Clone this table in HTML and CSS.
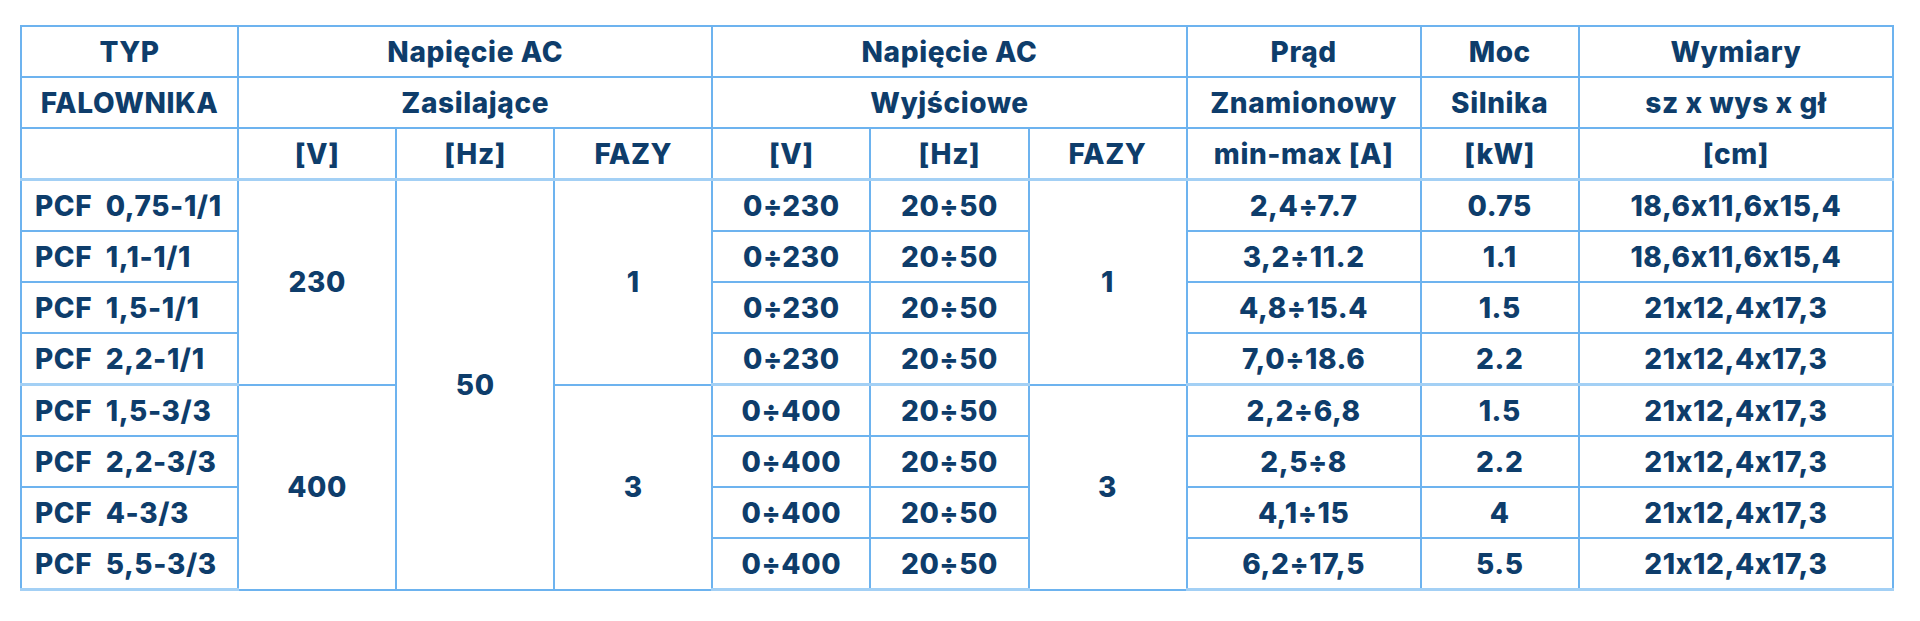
FILE: index.html
```html
<!DOCTYPE html>
<html lang="pl">
<head>
<meta charset="utf-8">
<title>Falowniki PCF</title>
<link rel="stylesheet" href="styles.css">
</head>
<body>
<table class="spec">
  <colgroup>
    <col class="c-typ">
    <col class="c-n">
    <col class="c-n">
    <col class="c-n">
    <col class="c-n">
    <col class="c-n">
    <col class="c-n">
    <col class="c-prad">
    <col class="c-n">
    <col class="c-wym">
  </colgroup>
  <tbody>
    <tr>
      <td>TYP</td>
      <td colspan="3">Napięcie AC</td>
      <td colspan="3">Napięcie AC</td>
      <td>Prąd</td>
      <td>Moc</td>
      <td>Wymiary</td>
    </tr>
    <tr>
      <td>FALOWNIKA</td>
      <td colspan="3">Zasilające</td>
      <td colspan="3">Wyjściowe</td>
      <td>Znamionowy</td>
      <td>Silnika</td>
      <td>sz x wys x gł</td>
    </tr>
    <tr class="head-last">
      <td></td>
      <td>[V]</td>
      <td>[Hz]</td>
      <td>FAZY</td>
      <td>[V]</td>
      <td>[Hz]</td>
      <td>FAZY</td>
      <td>min-max [A]</td>
      <td>[kW]</td>
      <td>[cm]</td>
    </tr>
    <tr>
      <td class="typ">PCF&nbsp; 0,75-1/1</td>
      <td rowspan="4">230</td>
      <td rowspan="8">50</td>
      <td rowspan="4">1</td>
      <td>0÷230</td>
      <td>20÷50</td>
      <td rowspan="4">1</td>
      <td>2,4÷7.7</td>
      <td>0.75</td>
      <td>18,6x11,6x15,4</td>
    </tr>
    <tr>
      <td class="typ">PCF&nbsp; 1,1-1/1</td>
      <td>0÷230</td>
      <td>20÷50</td>
      <td>3,2÷11.2</td>
      <td>1.1</td>
      <td>18,6x11,6x15,4</td>
    </tr>
    <tr>
      <td class="typ">PCF&nbsp; 1,5-1/1</td>
      <td>0÷230</td>
      <td>20÷50</td>
      <td>4,8÷15.4</td>
      <td>1.5</td>
      <td>21x12,4x17,3</td>
    </tr>
    <tr class="thick">
      <td class="typ">PCF&nbsp; 2,2-1/1</td>
      <td>0÷230</td>
      <td>20÷50</td>
      <td>7,0÷18.6</td>
      <td>2.2</td>
      <td>21x12,4x17,3</td>
    </tr>
    <tr>
      <td class="typ">PCF&nbsp; 1,5-3/3</td>
      <td rowspan="4">400</td>
      <td rowspan="4">3</td>
      <td>0÷400</td>
      <td>20÷50</td>
      <td rowspan="4">3</td>
      <td>2,2÷6,8</td>
      <td>1.5</td>
      <td>21x12,4x17,3</td>
    </tr>
    <tr>
      <td class="typ">PCF&nbsp; 2,2-3/3</td>
      <td>0÷400</td>
      <td>20÷50</td>
      <td>2,5÷8</td>
      <td>2.2</td>
      <td>21x12,4x17,3</td>
    </tr>
    <tr>
      <td class="typ">PCF&nbsp; 4-3/3</td>
      <td>0÷400</td>
      <td>20÷50</td>
      <td>4,1÷15</td>
      <td>4</td>
      <td>21x12,4x17,3</td>
    </tr>
    <tr class="thick">
      <td class="typ">PCF&nbsp; 5,5-3/3</td>
      <td>0÷400</td>
      <td>20÷50</td>
      <td>6,2÷17,5</td>
      <td>5.5</td>
      <td>21x12,4x17,3</td>
    </tr>
  </tbody>
</table>
</body>
</html>
```
FILE: styles.css
```css
html, body {
  margin: 0;
  padding: 0;
  background: #ffffff;
}

body {
  padding: 25px 0 0 20px;
}

.spec {
  border-collapse: collapse;
  table-layout: fixed;
  width: 1874px;
  font-family: Inter, "Noto Sans", sans-serif;
  font-weight: 800;
  font-size: 28px;
  letter-spacing: 0.6px;
  font-feature-settings: "calt" 0;
  color: #0e3d6b;
}

.c-typ { width: 217px; }
.c-n { width: 158px; }
.c-prad { width: 234px; }
.c-wym { width: 314px; }

.spec td {
  border: 2px solid #6db3ef;
  height: 49px;
  padding: 0;
  text-align: center;
  vertical-align: middle;
  white-space: nowrap;
  line-height: 1;
}

.spec td.typ {
  text-align: left;
  padding-left: 13px;
}

.spec tr.head-last td,
.spec tr.thick td {
  border-bottom: 3px solid #a3d0f5;
}
```
